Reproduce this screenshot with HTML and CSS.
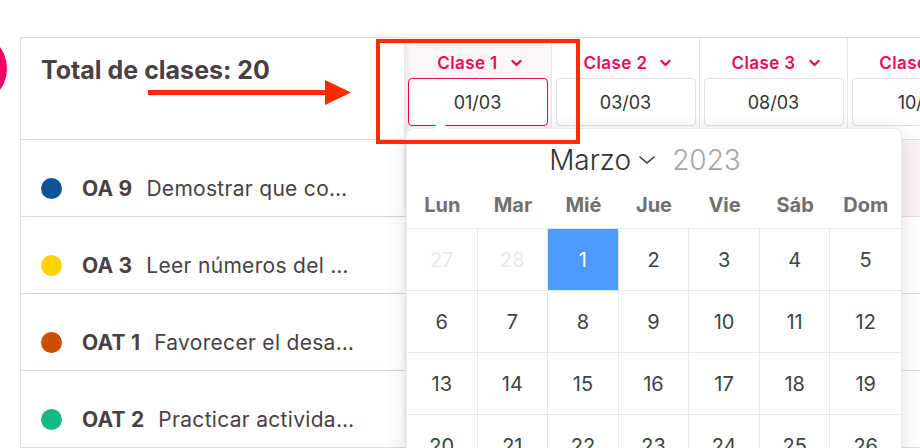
FILE: index.html
```html
<!DOCTYPE html>
<html lang="es">
<head>
    <meta charset="UTF-8">
    <meta name="viewport" content="width=device-width, initial-scale=1.0">
    <title>Planificación de clases</title>
    <link rel="stylesheet" href="styles.css">
</head>
<body>
    <div class="avatar"></div>

    <div class="page">
        <div class="table">
            <div class="row head">
                <div class="cell lead">
                    <h2 class="total">Total de clases: 20</h2>
                </div>
                <div class="cell col active">
                    <button class="col-title">Clase 1
                        <svg width="11" height="8" viewBox="0 0 11 8"><path d="M1.5 2l4 4 4-4" fill="none" stroke="currentColor" stroke-width="2.4" stroke-linecap="round" stroke-linejoin="round"/></svg>
                    </button>
                    <div class="date focus">01/03</div>
                </div>
                <div class="cell col">
                    <button class="col-title">Clase 2
                        <svg width="11" height="8" viewBox="0 0 11 8"><path d="M1.5 2l4 4 4-4" fill="none" stroke="currentColor" stroke-width="2.4" stroke-linecap="round" stroke-linejoin="round"/></svg>
                    </button>
                    <div class="date">03/03</div>
                </div>
                <div class="cell col">
                    <button class="col-title">Clase 3
                        <svg width="11" height="8" viewBox="0 0 11 8"><path d="M1.5 2l4 4 4-4" fill="none" stroke="currentColor" stroke-width="2.4" stroke-linecap="round" stroke-linejoin="round"/></svg>
                    </button>
                    <div class="date">08/03</div>
                </div>
                <div class="cell col">
                    <button class="col-title">Clase 4
                        <svg width="11" height="8" viewBox="0 0 11 8"><path d="M1.5 2l4 4 4-4" fill="none" stroke="currentColor" stroke-width="2.4" stroke-linecap="round" stroke-linejoin="round"/></svg>
                    </button>
                    <div class="date">10/03</div>
                </div>
            </div>

            <div class="row hover">
                <div class="cell lead">
                    <span class="dot" style="background:#0f5297"></span>
                    <b class="code">OA 9</b>
                    <span class="desc">Demostrar que comprenden la adición y la sustracción</span>
                </div>
                <div class="cell col"></div>
                <div class="cell col"></div>
                <div class="cell col"></div>
                <div class="cell col"></div>
            </div>
            <div class="row">
                <div class="cell lead">
                    <span class="dot" style="background:#ffd300"></span>
                    <b class="code">OA 3</b>
                    <span class="desc">Leer números del 0 al 100</span>
                </div>
                <div class="cell col"></div>
                <div class="cell col"></div>
                <div class="cell col"></div>
                <div class="cell col"></div>
            </div>
            <div class="row">
                <div class="cell lead">
                    <span class="dot" style="background:#cc4d03"></span>
                    <b class="code">OAT 1</b>
                    <span class="desc">Favorecer el desarrollo físico personal</span>
                </div>
                <div class="cell col"></div>
                <div class="cell col"></div>
                <div class="cell col"></div>
                <div class="cell col"></div>
            </div>
            <div class="row">
                <div class="cell lead">
                    <span class="dot" style="background:#12b886"></span>
                    <b class="code">OAT 2</b>
                    <span class="desc">Practicar actividades físicas en forma segura</span>
                </div>
                <div class="cell col"></div>
                <div class="cell col"></div>
                <div class="cell col"></div>
                <div class="cell col"></div>
            </div>
        </div>
    </div>

    <div class="datepicker">
        <div class="dp-month">
            <span class="month">Marzo</span>
            <svg width="18" height="12" viewBox="0 0 18 12"><path d="M2 3l7 6 7-6" fill="none" stroke="#333" stroke-width="1.6" stroke-linecap="round" stroke-linejoin="round"/></svg>
            <span class="year">2023</span>
        </div>
        <div class="dp-weekdays">
            <span>Lun</span><span>Mar</span><span>Mié</span><span>Jue</span><span>Vie</span><span>Sáb</span><span>Dom</span>
        </div>
        <div class="dp-days">
            <span class="muted">27</span><span class="muted">28</span><span class="selected">1</span><span>2</span><span>3</span><span>4</span><span>5</span>
            <span>6</span><span>7</span><span>8</span><span>9</span><span>10</span><span>11</span><span>12</span>
            <span>13</span><span>14</span><span>15</span><span>16</span><span>17</span><span>18</span><span>19</span>
            <span>20</span><span>21</span><span>22</span><span>23</span><span>24</span><span>25</span><span>26</span>
        </div>
    </div>

    <!-- annotation -->
    <svg class="arrow" width="210" height="30" viewBox="0 0 210 30">
        <rect x="0" y="10" width="180" height="5" fill="#ff2a00"/>
        <path d="M177 0L203 12.5L177 25z" fill="#ff2a00"/>
    </svg>
    <div class="highlight"></div>
</body>
</html>
```

FILE: styles.css
```css
* {
    box-sizing: border-box;
}
body {
    margin: 0;
    font-family: Inter, "Noto Sans", sans-serif;
    background-color: #fff;
    color: #4a4043;
    overflow: hidden;
}
.avatar {
    position: absolute;
    left: -66px;
    top: 32px;
    width: 73px;
    height: 73px;
    border-radius: 50%;
    background-color: #ee0764;
}
.page {
    height: 100vh;
    padding: 37px 0 0 20px;
    overflow: hidden;
}
.table {
    width: 976px;
    border-top: 1px solid #dedede;
    border-left: 1px solid #dedede;
}
.row {
    display: flex;
    height: 77px;
    border-bottom: 1px solid #dedede;
}
.row.head {
    height: 102px;
}
.cell {
    flex: none;
}
.lead {
    width: 383px;
    display: flex;
    align-items: center;
    padding: 20px 46px 0 20px;
    background-color: #fff;
    box-shadow: 5px 0 8px -4px rgba(0, 0, 0, 0.12);
    position: relative;
    z-index: 1;
}
.head .lead {
    align-items: flex-start;
    padding-top: 0;
}
.total {
    margin: 17px 0 0;
    font-size: 25px;
    font-weight: 700;
}
.col {
    width: 148px;
    border-right: 1px solid #e6e6e6;
}
.head .col {
    display: flex;
    flex-direction: column;
    align-items: center;
    padding: 13px 4px 0;
}
.head .col.active {
    background-color: #fdf6f9;
}
.row.hover .col {
    background-color: #fcf3f6;
}
.col-title {
    display: flex;
    align-items: center;
    gap: 13px;
    height: 24px;
    padding: 0 0 0 4px;
    border: none;
    background: none;
    font-family: inherit;
    font-size: 17px;
    font-weight: 600;
    letter-spacing: 0.4px;
    color: #ea0a5c;
    cursor: pointer;
}
.date {
    width: 140px;
    height: 48px;
    margin-top: 3px;
    display: flex;
    align-items: center;
    justify-content: center;
    border: 1px solid #e0e0e0;
    border-radius: 4px;
    background-color: #fff;
    font-size: 18px;
    color: #333;
}
.date.focus {
    border-color: #ea0a5c;
}
.dot {
    flex: none;
    width: 21px;
    height: 21px;
    border-radius: 50%;
    margin-right: 20px;
}
.code {
    flex: none;
    font-size: 21px;
    font-weight: 700;
    letter-spacing: 0.2px;
    margin-right: 14px;
}
.desc {
    flex: 1;
    min-width: 0;
    font-size: 21px;
    letter-spacing: 0.3px;
    white-space: nowrap;
    overflow: hidden;
    text-overflow: ellipsis;
}

/* date picker popover */
.datepicker {
    position: absolute;
    left: 406px;
    top: 128px;
    width: 496px;
    height: 340px;
    background-color: #fff;
    border: 1px solid #ececec;
    border-radius: 8px;
    box-shadow: 0 4px 22px rgba(0, 0, 0, 0.13);
    z-index: 5;
}
.datepicker::before {
    content: "";
    position: absolute;
    left: 28px;
    top: -6px;
    width: 10px;
    height: 10px;
    background-color: #fff;
    border-top: 1px solid #ececec;
    border-left: 1px solid #ececec;
    transform: rotate(45deg);
}
.dp-month {
    display: flex;
    align-items: center;
    justify-content: center;
    height: 34px;
    margin-top: 14px;
    padding-right: 18px;
    font-size: 28px;
    font-weight: 300;
}
.dp-month .month {
    color: #333;
}
.dp-month svg {
    margin: 0 16px 0 7px;
}
.dp-month .year {
    color: #a6a6a6;
}
.dp-weekdays {
    display: grid;
    grid-template-columns: repeat(7, 1fr);
    margin-top: 15px;
    height: 26px;
    line-height: 26px;
    margin-bottom: 10px;
    text-align: center;
    font-size: 20px;
    font-weight: 700;
    color: #707070;
}
.dp-days {
    display: grid;
    grid-template-columns: repeat(7, 1fr);
    border-top: 1px solid #e8e8e8;
}
.dp-days span {
    height: 62px;
    display: flex;
    align-items: center;
    justify-content: center;
    border-right: 1px solid #e8e8e8;
    border-bottom: 1px solid #e8e8e8;
    font-size: 20px;
    color: #3d4343;
}
.dp-days span:nth-child(7n) {
    border-right: none;
}
.dp-days .muted {
    color: #e9e9e9;
}
.dp-days .selected {
    background-color: #4f9aff;
    color: #fff;
}

/* annotation overlay */
.arrow {
    position: absolute;
    left: 148px;
    top: 80px;
    z-index: 10;
}
.highlight {
    position: absolute;
    left: 376px;
    top: 39px;
    width: 204px;
    height: 105px;
    border: 4.5px solid #ff2a00;
    z-index: 10;
}
```
